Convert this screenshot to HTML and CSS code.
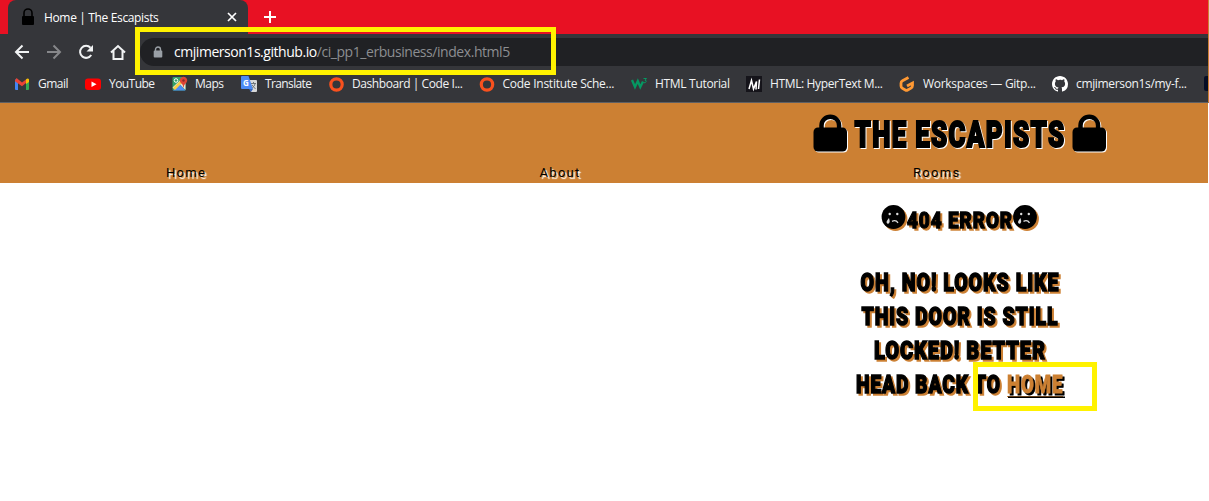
FILE: index.html
```html
<!DOCTYPE html>
<html lang="en">
<head>
<meta charset="utf-8">
<title>Home | The Escapists</title>
<link rel="stylesheet" href="styles.css">
</head>
<body>
<div class="browser">
  <div class="tabstrip">
    <div class="tab">
      <svg class="favicon" width="16" height="18" viewBox="0 0 16 18"><path d="M4 9V5a4 4 0 0 1 8 0v4" fill="none" stroke="#000" stroke-width="1.600"/><rect x="2" y="8" width="12" height="9" rx="1"/></svg>
      <span class="tab-title">Home | The Escapists</span>
      <svg class="close" width="10" height="10" viewBox="0 0 10 10"><path d="M1 1l8 8M9 1L1 9" stroke="#fff" stroke-width="1.700"/></svg>
    </div>
    <svg class="newtab" width="12" height="12" viewBox="0 0 12 12"><path d="M6 0v12M0 6h12" stroke="#fff" stroke-width="2"/></svg>
  </div>
  <div class="toolbar">
    <svg class="nav-icons" width="130" height="36" viewBox="0 0 130 36" fill="none" stroke-width="2">
      <path d="M29 18H16M22.500 11.500L16 18l6.500 6.500" stroke="#f1f3f4"/>
      <path d="M47 18h13M53.500 11.500L60 18l-6.500 6.500" stroke="#86878a"/>
      <path d="M91.200 21a6 6 0 1 1-.7-7.200" stroke="#f1f3f4"/><path d="M93 11v6.500h-6.500z" fill="#f1f3f4"/>
      <path d="M111 18.500l7-6.500 7 6.500M113.500 17v8h9v-8" stroke="#f1f3f4"/>
    </svg>
    <div class="omnibox">
      <svg width="10" height="12" viewBox="0 0 10 12"><path d="M2.500 5V3.500a2.500 2.500 0 0 1 5 0V5" fill="none" stroke="#9aa0a6" stroke-width="1.400"/><rect x=".7" y="4.500" width="8.600" height="7" rx="1" fill="#9aa0a6"/></svg>
      <span class="url"><span class="domain">cmjimerson1s.github.io</span><span class="path">/ci_pp1_erbusiness/index.html5</span></span>
    </div>
  </div>
  <div class="bookmarks">
    <svg class="bookmark-row" width="1208" height="32" viewBox="0 70 1208 32">
      <g><path d="M15 79.500h3V90h-2q-1 0-1-1z" fill="#4285f4"/><path d="M26 79.500h3V89q0 1-1 1h-2z" fill="#34a853"/><path d="M15 80.500L16.500 78 22 82.500v3.700l-7-5z" fill="#ea4335"/><path d="M22 82.500l4-3V83l-4 3.200z" fill="#ea4335"/><path d="M26 79.500q2-2 3 0V82l-3 2z" fill="#fbbc04"/></g>
      <rect x="85" y="78.500" width="16" height="11.500" rx="3" fill="#f00"/><path d="M91.500 81.500v5.500l5-2.750z" fill="#fff"/>
      <g><rect x="172.500" y="77" width="13" height="13.500" rx="1" fill="#34a067"/><path d="M172.500 87.500l10-9.500 3 3v9l-6-6-5 5z" fill="#e8e6d8"/><path d="M173 90.500l6.500-6.500 6 6.500z" fill="#4e8cf5"/><path d="M173 88l7-7 2 2-7 7z" fill="#f9cd45"/><circle cx="176" cy="80.500" r="1.800" fill="none" stroke="#fff"/><path d="M183.500 88q-.7-4-3-5.500a3.600 3.600 0 1 1 6 0q-2.300 1.500-3 5.500z" fill="#df4536"/><circle cx="183.500" cy="80.500" r="1.200" fill="#872f29"/></g>
      <g><path d="M247 80h9q1 0 1 1v10q0 1-1 1h-5z" fill="#d8d9da"/><path d="M242 76h6.500l4.500 13h-11q-1 0-1-1V77q0-1 1-1z" fill="#4c8bf5"/><path d="M249 89h4l-2 3z" fill="#3764b9"/><text x="243" y="85.500" class="g-letter">G</text><path d="M251 83.500h5M253.500 82v1.500M255.200 83.500q-.7 3-3 4.500M252 85l3.500 4" stroke="#71787d" fill="none"/></g>
      <circle cx="336.500" cy="84.500" r="5.700" fill="none" stroke="#f9511e" stroke-width="3.200"/>
      <circle cx="487" cy="84.500" r="5.700" fill="none" stroke="#f9511e" stroke-width="3.200"/>
      <path d="M632 80l3 7 2.800-6 2.500 6 2.700-5.500" fill="none" stroke="#059862" stroke-width="2.300"/><path d="M643.500 78.500h3l-1.500 1.700q3 .8 0 2.500h-1.500" fill="none" stroke="#059862"/>
      <rect x="746" y="76" width="16" height="16" fill="#15141a"/><path d="M749 89l2.500-8.500L753.500 89l3-7.500-.5 8M759.500 79.500L758.500 89" fill="none" stroke="#fff" stroke-width="1.500"/>
      <path d="M908.500 77.500l-6 3.300q-1.500.8-1.500 2.500v2.800q0 1.500 1.300 2.200l3 1.700q1.200.7 2.400 0l3.300-1.900q1.500-.9 1.500-2.600V83l-5.500 3" fill="none" stroke="#ff9933" stroke-width="2.800"/>
      <g transform="translate(1052 76)"><path fill="#fff" d="M8 0C3.580 0 0 3.580 0 8c0 3.540 2.290 6.530 5.470 7.590.4.070.55-.17.55-.38 0-.19-.01-.82-.01-1.490-2.010.37-2.530-.49-2.690-.94-.09-.23-.48-.94-.82-1.130-.28-.15-.68-.52-.01-.53.63-.01 1.080.58 1.230.82.72 1.210 1.870.87 2.330.66.07-.52.28-.87.510-1.070-1.780-.2-3.640-.89-3.640-3.950 0-.87.310-1.590.82-2.150-.08-.2-.36-1.020.08-2.120 0 0 .67-.21 2.200.82A7.600 7.600 0 0 1 8 3.860c.68 0 1.360.09 2 .27 1.530-1.040 2.200-.82 2.200-.82.44 1.100.16 1.920.08 2.120.510.560.82 1.270.82 2.150 0 3.070-1.870 3.750-3.650 3.950.29.250.54.730.54 1.480 0 1.070-.01 1.930-.01 2.200 0 .210.150.46.550.38A8 8 0 0 0 16 8c0-4.420-3.580-8-8-8z"/></g>
      <rect x="1204" y="76" width="12" height="15" rx="2" fill="#050d24"/>
      <g class="labels">
        <text x="38" y="88" textLength="30.500">Gmail</text>
        <text x="109" y="88" textLength="46">YouTube</text>
        <text x="195" y="88" textLength="29">Maps</text>
        <text x="265" y="88" textLength="47">Translate</text>
        <text x="352" y="88" textLength="111">Dashboard | Code I...</text>
        <text x="502.500" y="88" textLength="112">Code Institute Sche...</text>
        <text x="655" y="88" textLength="75">HTML Tutorial</text>
        <text x="770" y="88" textLength="113">HTML: HyperText M...</text>
        <text x="923" y="88" textLength="113">Workspaces — Gitp...</text>
        <text x="1076" y="88" textLength="111">cmjimerson1s/my-f...</text>
      </g>
    </svg>
  </div>
</div>
<header class="site-header">
  <svg class="brand" width="300" height="50" viewBox="810 108 300 50">
    <defs><g id="lock"><path d="M8 18v-6a8.800 8.800 0 0 1 17.600 0v6" fill="none" stroke="currentColor" stroke-width="4.500"/><rect x="0" y="14" width="33.500" height="24" rx="4.500" fill="currentColor"/></g></defs>
    <g class="shadowed"><use href="#lock" x="813.500" y="113.500"/><use href="#lock" x="1072.500" y="113.500"/>
    <text class="display title" x="854.500" y="146.500" textLength="211" lengthAdjust="spacingAndGlyphs">THE ESCAPISTS</text></g>
  </svg>
  <nav class="site-nav"><a>Home</a><a>About</a><a>Rooms</a></nav>
</header>
<main class="error">
  <svg class="message" width="220" height="210" viewBox="850 197 220 210">
    <defs><g id="sad"><circle r="11.900"/><g fill="#ddd"><circle cx="-3.800" cy="-3" r="1.200"/><circle cx="3.800" cy="-3" r="1.200"/><path d="M-4.500 1q-4 4.300-1.500 5.800 3.300 0 1.500-5.800z"/></g><path d="M-1.500 4.300q4-1.800 6 1.500" fill="none" stroke="#ddd" stroke-width="1.300"/></g></defs>
    <g class="amber">
      <use href="#sad" x="893.500" y="217"/><use href="#sad" x="1025" y="217"/>
      <text class="display small" x="907" y="227.500" textLength="106" lengthAdjust="spacingAndGlyphs">404 ERROR</text>
      <g class="display body">
        <text x="860.500" y="291.300" textLength="199" lengthAdjust="spacingAndGlyphs">OH, NO! LOOKS LIKE</text>
        <text x="861.500" y="325.300" textLength="197" lengthAdjust="spacingAndGlyphs">THIS DOOR IS STILL</text>
        <text x="874" y="359.300" textLength="172" lengthAdjust="spacingAndGlyphs">LOCKED! BETTER</text>
        <text x="856" y="393.300" textLength="145" lengthAdjust="spacingAndGlyphs">HEAD BACK TO</text>
      </g>
    </g>
    <path d="M1007 396.500h56" stroke="#cc8033"/><path d="M1008 397.250h57" stroke="#000" stroke-width="1.500"/>
    <text class="display body home" x="1007" y="393.300" textLength="56.500" lengthAdjust="spacingAndGlyphs">HOME</text>
  </svg>
</main>
<div class="mark mark-url"></div>
<div class="mark mark-home"></div>
</body>
</html>
```
FILE: styles.css
```css
* { box-sizing: border-box; }
body { margin: 0; width: 1209px; height: 501px; overflow: hidden; background: #fff; font-family: "Open Sans", "Noto Sans", sans-serif; }
svg { display: block; flex: none; overflow: visible; }
.bookmark-row { overflow: hidden; }
.browser { height: 103px; background: #35363a; border-right: 1px solid #cc8033; border-bottom: 1px solid #5f6063; }
.tabstrip { display: flex; height: 34px; padding-left: 8px; background: #e81123; }
.tab { display: flex; align-items: center; width: 240px; height: 34px; padding: 0 11px 0 12px; background: #35363a; border-radius: 8px 8px 0 0; color: #fff; font-size: 12px; }
.tab-title { margin-left: 8px; letter-spacing: -.35px; white-space: nowrap; }
.close { margin-left: auto; }
.newtab { margin: 11px 0 0 16px; }
.toolbar { display: flex; height: 36px; }
.omnibox { display: flex; align-items: center; flex: 1; height: 28px; margin: 4px 0 0 10px; padding-left: 13px; background: #202124; border-radius: 14px 0 0 14px; }
.url { margin: -2px 0 0 11px; font-size: 14px; white-space: nowrap; color: #8c8e91; }
.domain { color: #fff; letter-spacing: -.46px; }
.path { letter-spacing: -.44px; }
.labels { font-size: 12px; fill: #f1f3f4; }
.g-letter { font-size: 8px; font-weight: 700; fill: #fff; }
.site-header { display: flex; flex-direction: column; width: 1208px; height: 80px; padding: 5px 0 0; background: #cc8033; }
.brand { margin-left: 810px; }
.shadowed { filter: drop-shadow(1.500px 1.500px 0 #fff); }
.display { font-family: Roboto, sans-serif; font-weight: 900; letter-spacing: .05em; stroke: #000; stroke-width: 1.500px; stroke-linejoin: miter; }
.title { font-size: 37px; stroke-width: 2px; }
.small { font-size: 22.500px; stroke-width: 1.300px; }
.body { font-size: 26.500px; }
.site-nav { display: grid; grid-template-columns: 373.500px 373.500px 1fr; padding-left: 166px; font-family: Roboto, sans-serif; font-size: 13px; line-height: 18px; letter-spacing: 1.300px; color: #000; text-shadow: 2px 2px 1px #fff; }
.site-nav a { padding-top: 6px; }
.error { padding: 14px 0 0 850px; }
.amber { filter: drop-shadow(2px 2px 0 #cc8033); }
.home { fill: #cc8033; stroke: #cc8033; stroke-width: .8px; filter: drop-shadow(2px 2px 0 #000); }
.mark { position: absolute; border: 5px solid #fff200; }
.mark-url { left: 135px; top: 27px; width: 421px; height: 48px; }
.mark-home { left: 973px; top: 362px; width: 124px; height: 49px; }
```
